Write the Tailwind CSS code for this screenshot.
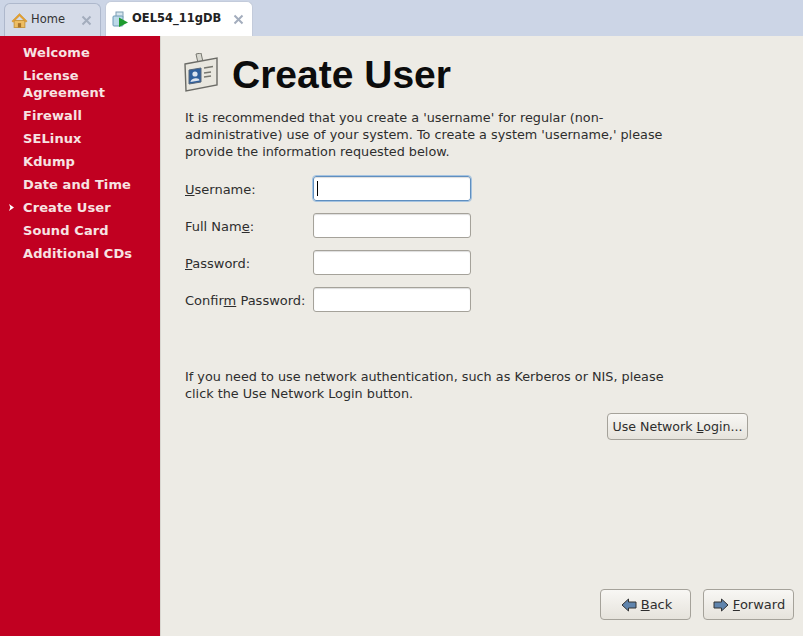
<!DOCTYPE html>
<html lang="en">
<head>
  <meta charset="UTF-8" />
  <title>Create User</title>
  <script src="https://cdn.jsdelivr.net/npm/@tailwindcss/browser@4"></script>
</head>
<body class="w-[803px] h-[636px] overflow-hidden flex flex-col bg-[#edebe5] text-[#2e2e2e] font-['DejaVu_Sans',sans-serif] text-[13px]">

  <!-- Tab strip -->
  <header class="h-9 shrink-0 bg-[#ccd5e6] flex items-end pl-[4px] gap-[4px]">
    <div class="w-[97px] h-[33px] flex items-center pl-[6px] bg-[#d5dbe8] border border-b-0 border-[#aeb8cc] rounded-t-[6px] text-[11.5px] text-[#333]">
      <svg class="w-[17px] h-[17px] shrink-0" viewBox="0 0 16 16">
        <path d="M3 8v6.5h10V8z" fill="#eebd62" stroke="#c99a45" />
        <path d="M6.500 14.500v-4h3v4z" fill="#a8742a" />
        <path d="M0.800 8.600 8 1.500l7.200 7.100-1.200 1L8 3.800 2 9.600z" fill="#e6a12c" stroke="#c98e32" stroke-width=".5" />
      </svg>
      <span class="ml-[3px]">Home</span>
      <svg class="ml-auto mr-[8px] w-[11px] h-[11px]" viewBox="0 0 11 11"><path d="M1.500 1.500l8 8M9.500 1.500l-8 8" stroke="#a3adbd" stroke-width="2" /></svg>
    </div>
    <div class="w-[148px] h-[35px] flex items-center pl-[6px] bg-white border border-b-0 border-[#c3cbdb] rounded-t-[6px] text-[11.5px] font-bold text-[#222]">
      <svg class="w-[17px] h-[17px] shrink-0" viewBox="0 0 17 17">
        <rect x="4" y="1" width="7" height="5" fill="#d7e6ee" stroke="#7f9eb3" />
        <rect x="1" y="5" width="10" height="10" rx="1" fill="#bcd9e8" stroke="#6f9ab6" />
        <path d="M7 6.500 16 11.500 7 16z" fill="#1e9b2e" />
      </svg>
      <span class="ml-[3px]">OEL54_11gDB</span>
      <svg class="ml-auto mr-[8px] w-[11px] h-[11px]" viewBox="0 0 11 11"><path d="M1.500 1.500l8 8M9.500 1.500l-8 8" stroke="#a3adbd" stroke-width="2" /></svg>
    </div>
  </header>

  <div class="flex-1 flex min-h-0">
    <!-- Steps sidebar -->
    <nav class="w-[161px] shrink-0 bg-[#c10021] border-r border-[#d9d6d0] text-[#f7e3e3] font-bold text-[13px] tracking-[0.1px] leading-[17px] pl-[23px] pt-[8px] flex flex-col gap-[6px]">
      <div>Welcome</div>
      <div>License<br />Agreement</div>
      <div>Firewall</div>
      <div>SELinux</div>
      <div>Kdump</div>
      <div>Date and Time</div>
      <div class="relative">
        <svg class="absolute left-[-14px] top-[5px] w-[5px] h-[7px]" viewBox="0 0 5 7"><path d="M0 0l5 3.500L0 7l1.300-3.500z" fill="#fff" /></svg>
        Create User
      </div>
      <div>Sound Card</div>
      <div>Additional CDs</div>
    </nav>

    <!-- Main panel -->
    <main class="flex-1 flex flex-col pl-[24px] pr-[9px] pt-[15px] pb-[16px]">
      <div class="flex items-center gap-[13px] h-[46px]">
        <svg class="w-[35px] h-[40px] shrink-0 -ml-[1px] -mt-[3px]" viewBox="0 0 35 40">
          <path d="M12 1l5-1 2 9-5 1z" fill="#d8d8d0" stroke="#77776f" />
          <path d="M1 11 33 5v27L2 38z" fill="#e9e7df" stroke="#6b6b66" stroke-width="1.400" />
          <path d="M5 17l12-2v14L5 31z" fill="#2e5f9c" stroke="#56667a" />
          <circle cx="11" cy="21" r="2.600" fill="#dbe4ef" />
          <path d="M6.500 29c0-4 9-5.500 9-1.500z" fill="#dbe4ef" />
          <path d="M20 15l9-1.500M20 20l7-1M20 24l7-1" stroke="#77776f" stroke-width="1.300" />
        </svg>
        <h1 class="font-['Liberation_Sans',sans-serif] font-bold text-[39px] leading-none text-[#0c0c0c]">Create User</h1>
      </div>

      <p class="mt-[12px] text-[12.8px] leading-[17px]">It is recommended that you create a 'username' for regular (non-<br />administrative) use of your system. To create a system 'username,' please<br />provide the information requested below.</p>

      <div class="mt-[16px] grid grid-cols-[128px_158px] gap-y-[12px] items-center">
        <label class="pt-[2px]"><span class="underline">U</span>sername:</label>
        <div class="relative">
          <input class="block w-full h-[25px] border border-[#5f8fc0] rounded-[3px] bg-white outline outline-[#a5c3e0] shadow-[inset_0_1px_1px_#ddd]" />
          <span class="absolute left-[4px] top-[5px] w-px h-[15px] bg-black"></span>
        </div>
        <label class="pt-[2px]">Full Nam<span class="underline">e</span>:</label>
        <input class="h-[25px] border border-[#a5a29a] rounded-[3px] bg-white shadow-[inset_0_1px_1px_#ddd]" />
        <label class="pt-[2px]"><span class="underline">P</span>assword:</label>
        <input class="h-[25px] border border-[#a5a29a] rounded-[3px] bg-white shadow-[inset_0_1px_1px_#ddd]" />
        <label class="pt-[2px]">Confir<span class="underline">m</span> Password:</label>
        <input class="h-[25px] border border-[#a5a29a] rounded-[3px] bg-white shadow-[inset_0_1px_1px_#ddd]" />
      </div>

      <p class="mt-[56px] text-[12.8px] leading-[17px]">If you need to use network authentication, such as Kerberos or NIS, please<br />click the Use Network Login button.</p>

      <div class="mt-[11px] flex justify-end pr-[46px]">
        <button class="w-[141px] h-[27px] pt-[2px] text-[12.600px] border border-[#a5a29a] rounded-[4px] bg-gradient-to-b from-[#f8f7f4] to-[#e6e3dc]">Use Network <span class="underline">L</span>ogin...</button>
      </div>

      <div class="mt-auto flex justify-end gap-[12px]">
        <button class="w-[91px] h-[31px] flex items-center justify-center gap-[4px] pl-[2px] border border-[#a5a29a] rounded-[4px] bg-gradient-to-b from-[#f8f7f4] to-[#e6e3dc]">
          <svg class="w-[16px] h-[14px]" viewBox="0 0 16 14"><path d="M1 7 7.500 1v3H15v6H7.500v3z" fill="#5f84ad" stroke="#333" /></svg>
          <span><span class="underline">B</span>ack</span>
        </button>
        <button class="w-[91px] h-[31px] flex items-center justify-center gap-[4px] pl-[1px] border border-[#a5a29a] rounded-[4px] bg-gradient-to-b from-[#f8f7f4] to-[#e6e3dc]">
          <svg class="w-[16px] h-[14px]" viewBox="0 0 16 14"><path d="M15 7 8.500 1v3H1v6h7.500v3z" fill="#5f84ad" stroke="#333" /></svg>
          <span><span class="underline">F</span>orward</span>
        </button>
      </div>
    </main>
  </div>
</body>
</html>
